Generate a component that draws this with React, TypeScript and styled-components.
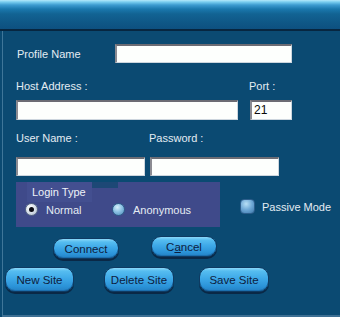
import React from "react";
import styled, { createGlobalStyle } from "styled-components";

const GlobalStyle = createGlobalStyle`
  html, body {
    margin: 0;
    padding: 0;
    background: #0b4a72;
  }
`;

interface WidthProps {
  w: number;
}

interface ButtonProps {
  w: number;
  h: number;
  mt?: number;
  ml?: number;
}

const Window = styled.div`
  width: 340px;
  height: 317px;
  overflow: hidden;
  background: #0b4a72;
  font-family: "Liberation Sans", Arial, sans-serif;
  font-size: 11px;
  color: #e4ecf3;
  display: flex;
  flex-direction: column;
`;

const TitleBar = styled.div`
  height: 29px;
  flex-shrink: 0;
  background: linear-gradient(
    to bottom,
    #b4e8fa 0,
    #78cdef 2px,
    #3c9bd0 5px,
    #1a78ad 9px,
    #126393 14px,
    #0f5887 22px,
    #0d5080 29px
  );
  border-bottom: 2px solid #072640;
`;

const Body = styled.div`
  flex: 1;
  margin-left: 2px;
  border-left: 1px solid #3f7699;
  border-bottom: 2px solid #3d6f93;
  padding: 13px 0 0 13px;
  display: flex;
  flex-direction: column;
`;

const Row = styled.div<{ mt?: number }>`
  display: flex;
  align-items: center;
  margin-top: ${(p) => (p.mt ? `${p.mt}px` : 0)};
`;

const Label = styled.span<{ w?: number; pl?: number }>`
  display: inline-block;
  line-height: 14px;
  white-space: nowrap;
  width: ${(p) => (p.w ? `${p.w}px` : "auto")};
  padding-left: ${(p) => (p.pl ? `${p.pl}px` : 0)};
`;

const TextBox = styled.div<WidthProps & { h: number; ml?: number }>`
  box-sizing: border-box;
  width: ${(p) => p.w}px;
  height: ${(p) => p.h}px;
  margin-left: ${(p) => (p.ml ? `${p.ml}px` : 0)};
  background: #fdfffd;
  border-top: 2px solid #6c6c74;
  border-left: 2px solid #8b8b92;
  border-right: 1px solid #cdd6de;
  border-bottom: 1px solid #cdd6de;
  color: #0a0a0a;
  font-size: 12px;
  line-height: 16px;
  padding-left: 2px;
`;

const LoginPanel = styled.div`
  width: 204px;
  height: 45px;
  background: #3f4a8a;
  display: flex;
  flex-direction: column;
`;

const LegendRow = styled.div`
  display: flex;
  align-items: flex-start;
  margin-left: 11px;
  height: 20px;
`;

const Legend = styled.div`
  width: 65px;
  height: 20px;
  background: #434f90;
  box-sizing: border-box;
  padding-left: 5px;
  line-height: 20px;
  color: #eef2f8;
`;

const Notch = styled.div`
  width: 26px;
  height: 6px;
  background: #1d4876;
`;

const RadioRow = styled.div`
  display: flex;
  align-items: center;
  margin-top: 1px;
  padding-left: 9px;
`;

const Option = styled.label<{ w?: number }>`
  display: flex;
  align-items: center;
  gap: 8px;
  width: ${(p) => (p.w ? `${p.w}px` : "auto")};
`;

const Radio = styled.span<{ checked?: boolean }>`
  width: 13px;
  height: 13px;
  border-radius: 50%;
  box-sizing: border-box;
  display: flex;
  align-items: center;
  justify-content: center;
  background: ${(p) =>
    p.checked
      ? "radial-gradient(circle at 40% 35%, #ffffff 0, #d4dde8 55%, #9aa8bc 100%)"
      : "radial-gradient(circle at 40% 30%, #d8f0fc 0, #8cc2e4 45%, #4c88b8 100%)"};
  border: 1px solid ${(p) => (p.checked ? "#5a6a88" : "#2f5f8a")};

  &::after {
    content: "";
    display: ${(p) => (p.checked ? "block" : "none")};
    width: 5px;
    height: 5px;
    border-radius: 50%;
    background: #0a0a14;
  }
`;

const PassiveOption = styled.label`
  display: flex;
  align-items: center;
  gap: 7px;
  margin-left: 20px;
  margin-top: 4px;
`;

const CheckBox = styled.span`
  width: 15px;
  height: 15px;
  border-radius: 4px;
  box-sizing: border-box;
  background: radial-gradient(circle at 40% 30%, #b8e0f6 0, #6ea8d6 50%, #3e78aa 100%);
  border: 1px solid #2d5e8c;
`;

const ButtonRow = styled.div<{ mt: number; pl: number }>`
  display: flex;
  align-items: flex-start;
  margin-top: ${(p) => p.mt}px;
  margin-left: ${(p) => p.pl - 16}px;
`;

const PillButton = styled.button<ButtonProps>`
  box-sizing: border-box;
  width: ${(p) => p.w}px;
  height: ${(p) => p.h}px;
  margin-top: ${(p) => (p.mt ? `${p.mt}px` : 0)};
  margin-left: ${(p) => (p.ml ? `${p.ml}px` : 0)};
  padding: 0;
  border: 1px solid #0f3a62;
  border-radius: 10px;
  background: linear-gradient(
    to bottom,
    #8ad8fa 0,
    #56bdf0 3px,
    #3ea9e8 45%,
    #2b93d8 80%,
    #2480c4 100%
  );
  box-shadow: 0 2px 0 #0a2846, inset 0 -1px 0 #1c6fae;
  font-family: "Liberation Sans", Arial, sans-serif;
  font-size: 11.5px;
  color: #0d2040;
  text-align: center;
  cursor: pointer;

  u {
    text-decoration: underline;
    text-underline-offset: 1px;
  }
`;

const App = () => {
  return (
    <Window>
      <GlobalStyle />
      <TitleBar />
      <Body>
        <Row>
          <Label w={98} pl={1}>
            Profile Name
          </Label>
          <TextBox w={177} h={19} />
        </Row>

        <Row mt={16}>
          <Label w={233}>Host Address :</Label>
          <Label>Port :</Label>
        </Row>

        <Row mt={7}>
          <TextBox w={222} h={20} />
          <TextBox w={42} h={20} ml={12}>
            21
          </TextBox>
        </Row>

        <Row mt={11}>
          <Label w={133}>User Name :</Label>
          <Label>Password :</Label>
        </Row>

        <Row mt={12}>
          <TextBox w={129} h={19} />
          <TextBox w={129} h={19} ml={5} />
        </Row>

        <Row mt={6}>
          <LoginPanel>
            <LegendRow>
              <Legend>Login Type</Legend>
              <Notch />
            </LegendRow>
            <RadioRow>
              <Option w={87}>
                <Radio checked />
                Normal
              </Option>
              <Option>
                <Radio />
                Anonymous
              </Option>
            </RadioRow>
          </LoginPanel>
          <PassiveOption>
            <CheckBox />
            Passive Mode
          </PassiveOption>
        </Row>

        <ButtonRow mt={9} pl={53}>
          <PillButton w={66} h={21} mt={2}>
            Connect
          </PillButton>
          <PillButton w={66} h={21} ml={32}>
            C<u>a</u>ncel
          </PillButton>
        </ButtonRow>

        <ButtonRow mt={8} pl={5}>
          <PillButton w={69} h={25}>
            New Site
          </PillButton>
          <PillButton w={70} h={25} ml={30}>
            Delete Site
          </PillButton>
          <PillButton w={70} h={25} ml={25}>
            Save Site
          </PillButton>
        </ButtonRow>
      </Body>
    </Window>
  );
};

export default App;
